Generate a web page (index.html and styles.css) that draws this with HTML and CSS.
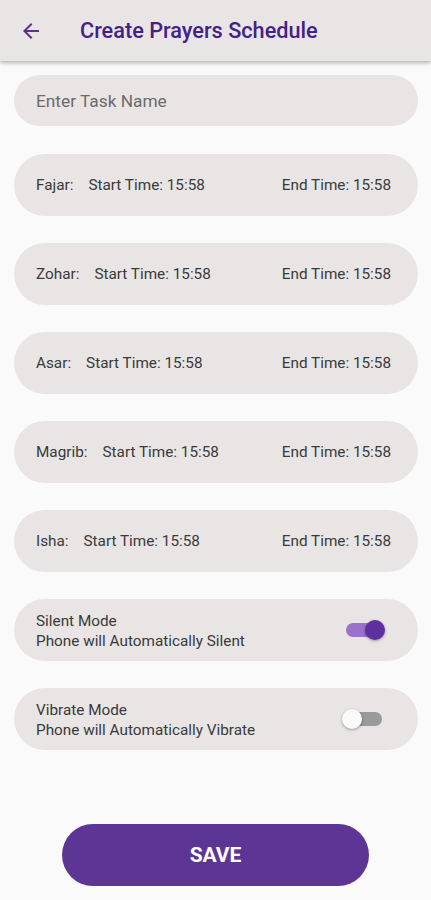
FILE: index.html
```html
<!DOCTYPE html>
<html lang="en">
<head>
  <meta charset="UTF-8">
  <title>Create Prayers Schedule</title>
  <link rel="stylesheet" href="styles.css">
</head>
<body>
  <div class="topbar">
    <svg class="back" width="24" height="24" viewBox="0 0 24 24">
      <path d="M20 11H7.83l5.59-5.59L12 4l-8 8 8 8 1.41-1.41L7.83 13H20v-2z" fill="#5a2f9c"/>
    </svg>
    <h1 class="title">Create Prayers Schedule</h1>
  </div>
  <div class="content">
    <div class="pill input">Enter Task Name</div>
    <div class="list">
      <div class="pill row">
        <span class="name">Fajar:</span>
        <span class="start">Start Time: 15:58</span>
        <span class="end">End Time: 15:58</span>
      </div>
      <div class="pill row">
        <span class="name">Zohar:</span>
        <span class="start">Start Time: 15:58</span>
        <span class="end">End Time: 15:58</span>
      </div>
      <div class="pill row">
        <span class="name">Asar:</span>
        <span class="start">Start Time: 15:58</span>
        <span class="end">End Time: 15:58</span>
      </div>
      <div class="pill row">
        <span class="name">Magrib:</span>
        <span class="start">Start Time: 15:58</span>
        <span class="end">End Time: 15:58</span>
      </div>
      <div class="pill row">
        <span class="name">Isha:</span>
        <span class="start">Start Time: 15:58</span>
        <span class="end">End Time: 15:58</span>
      </div>
      <div class="pill row mode">
        <div class="mode-text">
          <div>Silent Mode</div>
          <div>Phone will Automatically Silent</div>
        </div>
        <div class="switch on"><span class="thumb"></span></div>
      </div>
      <div class="pill row mode">
        <div class="mode-text">
          <div>Vibrate Mode</div>
          <div>Phone will Automatically Vibrate</div>
        </div>
        <div class="switch"><span class="thumb"></span></div>
      </div>
    </div>
    <button class="save">SAVE</button>
  </div>
</body>
</html>
```

FILE: styles.css
```css
* {
  padding: 0;
  margin: 0;
  box-sizing: border-box;
}
body {
  background: #fafafa;
  font-family: Roboto, "Noto Sans", sans-serif;
  width: 431px;
  height: 900px;
  overflow: hidden;
}
.topbar {
  height: 61px;
  background: #e9e5e4;
  display: flex;
  align-items: center;
  padding: 0 0 0 19px;
  box-shadow: 0 2px 4px rgba(0, 0, 0, 0.28);
  position: relative;
}
.back {
  margin-top: 1px;
}
.title {
  font-size: 21.7px;
  font-weight: 500;
  color: #43218a;
  margin-left: 37px;
}
.content {
  padding: 14px 13px 0 14px;
}
.pill {
  background: #e9e5e4;
  border-radius: 31px;
  color: #3a3a3a;
}
.input {
  height: 51px;
  display: flex;
  align-items: center;
  padding-left: 22px;
  font-size: 17.3px;
  color: #6b6b6b;
}
.list {
  margin-top: 28px;
  display: flex;
  flex-direction: column;
  gap: 27px;
}
.row {
  height: 62px;
  display: flex;
  align-items: center;
  padding: 0 27px 0 22px;
  font-size: 15.3px;
}
.name {
  margin-right: 15px;
}
.end {
  margin-left: auto;
}
.mode {
  padding-right: 36px;
}
.mode-text {
  line-height: 20px;
  margin-top: 1px;
}
.switch {
  margin-left: auto;
  width: 36px;
  height: 14px;
  border-radius: 7px;
  background: #9a9a9a;
  position: relative;
}
.switch .thumb {
  position: absolute;
  top: -3px;
  left: -4px;
  width: 20px;
  height: 20px;
  border-radius: 50%;
  background: #fafafa;
  box-shadow: 0 1px 3px rgba(0, 0, 0, 0.35);
}
.switch.on {
  background: #9a72c9;
}
.switch.on .thumb {
  left: auto;
  right: -3px;
  background: #5e2f9e;
}
.save {
  display: block;
  margin: 74px 0 0 48px;
  width: 307px;
  height: 62px;
  border: none;
  border-radius: 31px;
  background: #5d3594;
  color: #fff;
  font-family: Roboto, "Noto Sans", sans-serif;
  font-size: 21px;
  font-weight: 700;
}
```
